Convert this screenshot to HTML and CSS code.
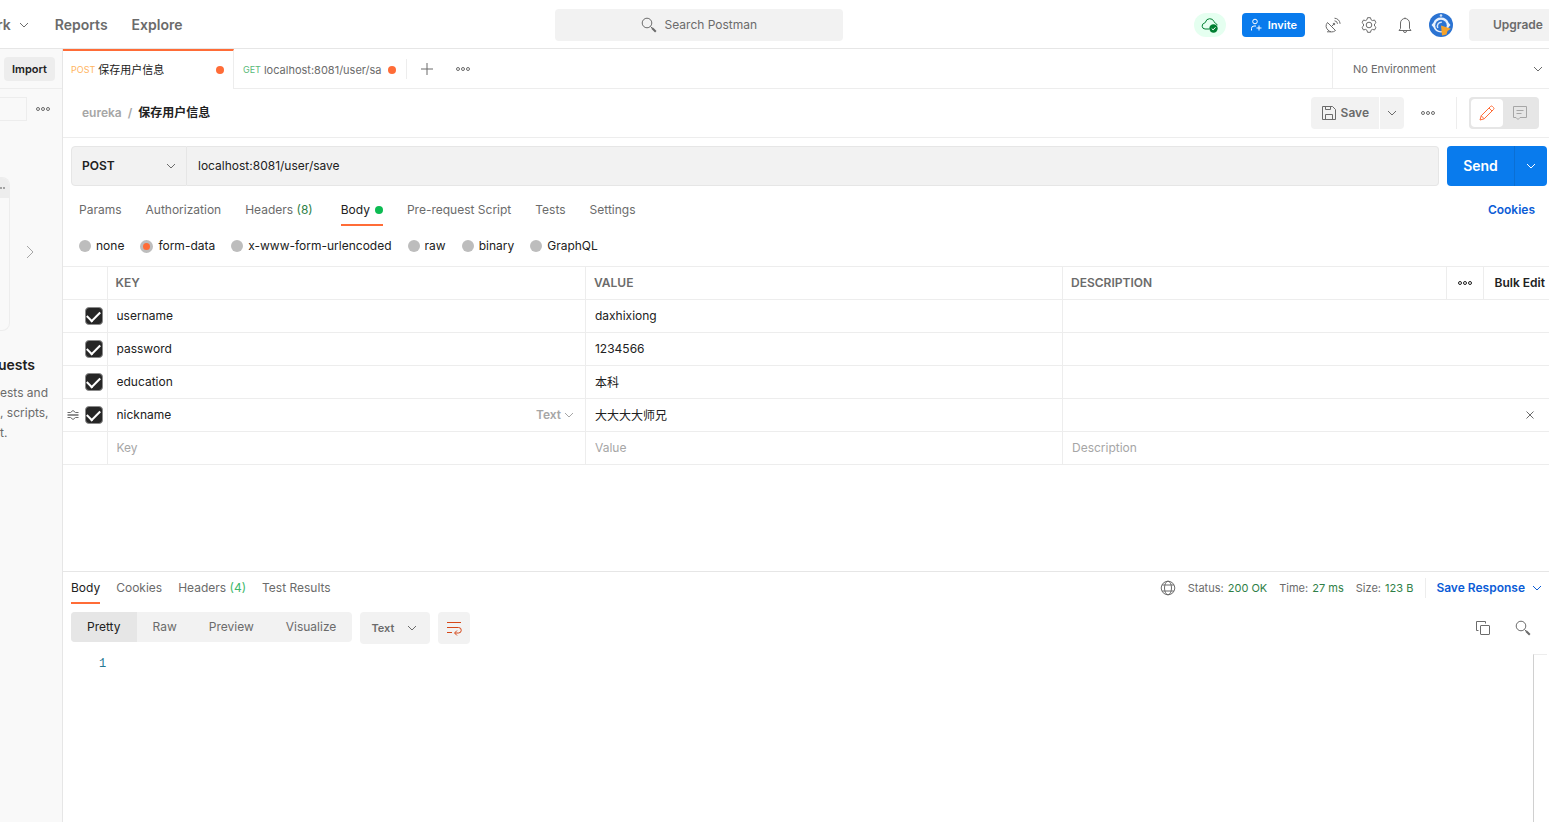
FILE: index.html
```html
<!DOCTYPE html>
<html lang="en">
<head>
    <meta charset="UTF-8">
    <meta name="viewport" content="width=device-width, initial-scale=1.0">
    <title>Postman</title>
    <link rel="stylesheet" href="styles.css">
</head>
<body>
    <!-- shared icons -->
    <svg class="sprite" width="0" height="0" aria-hidden="true">
        <symbol id="chevron" viewBox="0 0 10 6"><path d="M1 1l4 4 4-4"/></symbol>
        <symbol id="dots" viewBox="0 0 14 6"><circle cx="2" cy="3" r="1.5"/><circle cx="7" cy="3" r="1.5"/><circle cx="12" cy="3" r="1.5"/></symbol>
        <symbol id="search" viewBox="0 0 16 16"><circle cx="6" cy="6" r="4.8"/><path d="M9.5 9.5l1.5 1.5"/><path d="M11 11l3.8 3.8" stroke-width="2"/></symbol>
    </svg>

    <header class="topbar">
        <nav class="topnav">
            <a href="#" class="workspace">rk <svg class="icon chevron"><use href="#chevron"/></svg></a>
            <a href="#">Reports</a>
            <a href="#">Explore</a>
        </nav>
        <button type="button" class="search">
            <svg class="icon i16"><use href="#search"/></svg>
            Search Postman
        </button>
        <div class="top-actions">
            <button type="button" class="sync" aria-label="Sync status">
                <svg class="icon" width="18" height="16" viewBox="0 0 18 16">
                    <path d="M8 12H4a3 3 0 0 1-.6-5.9C4 6 4.300 5.700 4.500 5A4.500 4.500 0 0 1 13 4.500c.2.900.5 1.200 1.200 1.500 1.100.5 1.800 1.200 2 2.300"/>
                    <circle cx="12.500" cy="11.500" r="4.200" fill="#007f31" stroke="none"/>
                    <path d="M10.700 11.500l1.400 1.400 2.400-2.600" stroke="#fff"/>
                </svg>
            </button>
            <button type="button" class="invite">
                <svg class="icon" width="12" height="14" viewBox="0 0 12 14"><circle cx="5" cy="3.500" r="2.300"/><path d="M1.500 12.500V10.500a2.500 2.500 0 0 1 2.500-2.500h2M9 7.500v5M6.500 10h5"/></svg>
                Invite
            </button>
            <button type="button" class="plain" aria-label="Capture requests">
                <svg class="icon i16" viewBox="0 0 16 16"><path d="M2.500 5.500l8 8A5.700 5.700 0 0 1 2.500 5.500zM6.500 9.500l2.300-2.300M2 14.800h4M9.500 3.800a3.200 3.200 0 0 1 3 3M9.500 1.200a5.800 5.800 0 0 1 5.600 5.600"/><circle cx="9" cy="7" r=".8" fill="currentColor"/></svg>
            </button>
            <button type="button" class="plain" aria-label="Settings">
                <svg class="icon i16" viewBox="0 0 16 16"><path d="M6.500.7h3l.5 2 1.500.9 2-.6 1.500 2.600L13.500 7v2l1.500 1.400-1.500 2.600-2-.6-1.500.9-.5 2h-3l-.5-2-1.500-.9-2 .6L1 10.400 2.500 9V7L1 5.600 2.500 3l2 .6L6 2.700z"/><circle cx="8" cy="8" r="2.800"/></svg>
            </button>
            <button type="button" class="plain" aria-label="Notifications">
                <svg class="icon i16" viewBox="0 0 16 16"><path d="M8 .5v1M3.500 11.500V6a4.500 4.500 0 0 1 9 0v5.500l1.500 2H2zM6.500 14a1.500 1.500 0 0 0 3 0"/></svg>
            </button>
            <button type="button" class="avatar" aria-label="Account">
                <svg width="24" height="24" viewBox="0 0 24 24">
                    <circle cx="12" cy="12" r="12" fill="#2b73d2"/>
                    <circle cx="12" cy="2.500" r="1.300" fill="#cfe0f7"/>
                    <path d="M12 4.500c4 0 6.500 2 7.600 5.200l1.900 2.300-1.900 2.300c-1.100 3-3.600 5.200-7.600 5.200s-6.500-2.200-7.600-5.200L2.500 12l1.900-2.300C5.500 6.500 8 4.500 12 4.500z" fill="#e9f1fc"/>
                    <circle cx="12" cy="12.500" r="5.800" fill="#2b73d2"/>
                    <path d="M8.800 15a4 4 0 0 1 4-5.800" fill="none" stroke="#d8e7fb" stroke-width="1.500"/>
                    <path d="M12 12.500l10 3.200-3.500 2.300-1 3.500-4.500 1z" fill="#f5a32c"/>
                </svg>
            </button>
            <button type="button" class="upgrade">Upgrade</button>
        </div>
    </header>

    <div class="layout">
        <aside class="sidebar">
            <div class="side-head"><button type="button" class="import">Import</button></div>
            <div class="side-filter">
                <input type="text" class="filter" aria-label="Filter">
                <button type="button" class="plain" aria-label="More"><svg class="icon dots"><use href="#dots"/></svg></button>
            </div>
            <div class="side-card">
                <div class="card"><div class="card-head"><i></i><i></i></div></div>
                <svg class="icon next" width="8" height="14" viewBox="0 0 8 14"><path d="M1 1l6 6-6 6"/></svg>
            </div>
            <div class="side-text">
                <h2>uests</h2>
                <p>ests and<br>, scripts,<br>t.</p>
            </div>
        </aside>

        <main class="main">
            <div class="tabbar">
                <a href="#" class="tab active"><span class="method post">POST</span><span class="tab-name">保存用户信息</span><i class="unsaved"></i></a>
                <a href="#" class="tab"><span class="method get">GET</span><span class="tab-name">localhost:8081/user/sa</span><i class="unsaved"></i></a>
                <div class="tab-tools">
                    <button type="button" class="plain" aria-label="New tab"><svg class="icon" width="12" height="12" viewBox="0 0 12 12"><path d="M6 0v12M0 6h12"/></svg></button>
                    <button type="button" class="plain" aria-label="Tab options"><svg class="icon dots"><use href="#dots"/></svg></button>
                </div>
                <div class="picker environment">
                    <select aria-label="Environment"><option>No Environment</option></select>
                    <svg class="icon chevron"><use href="#chevron"/></svg>
                </div>
            </div>

            <div class="titlebar">
                <a href="#" class="crumb">eureka</a><span class="crumb">/</span><h1>保存用户信息</h1>
                <div class="save-group">
                    <button type="button" class="save">
                        <svg class="icon" width="14" height="14" viewBox="0 0 14 14"><path d="M.5.500h10l3 3v10H.500zM3.500.500v3h5v-3M3.500 13.500v-5h7v5"/></svg>
                        Save
                    </button>
                    <button type="button" class="save-more" aria-label="Save options"><svg class="icon chevron"><use href="#chevron"/></svg></button>
                </div>
                <button type="button" class="plain more" aria-label="More"><svg class="icon dots"><use href="#dots"/></svg></button>
                <div class="modes">
                    <button type="button" class="mode on" aria-label="Edit"><svg class="icon i16" viewBox="0 0 16 16"><path d="M1 15l1.200-4.200L11.500 1.500a1.400 1.400 0 0 1 2 0l1 1a1.400 1.400 0 0 1 0 2L5.200 13.800zM2.200 10.800l3 3M10 3l3 3"/></svg></button>
                    <button type="button" class="mode" aria-label="Comments"><svg class="icon i16" viewBox="0 0 16 16"><path d="M1.500 1.500h13v11H8l-2 2-2-2H1.500zM4.500 5.500h7M4.500 8.500h5"/></svg></button>
                </div>
            </div>

            <form class="request">
                <div class="picker verb">
                    <select aria-label="Method"><option>POST</option><option>GET</option></select>
                    <svg class="icon chevron"><use href="#chevron"/></svg>
                </div>
                <input type="text" class="url" value="localhost:8081/user/save" aria-label="Request URL">
                <div class="send-group">
                    <button type="button" class="send">Send</button>
                    <button type="button" class="send-more" aria-label="Send options"><svg class="icon chevron"><use href="#chevron"/></svg></button>
                </div>
            </form>

            <nav class="subtabs">
                <a href="#">Params</a>
                <a href="#">Authorization</a>
                <a href="#">Headers <span class="count">(8)</span></a>
                <a href="#" class="active">Body<i></i></a>
                <a href="#">Pre-request Script</a>
                <a href="#">Tests</a>
                <a href="#">Settings</a>
                <a href="#" class="cookies">Cookies</a>
            </nav>

            <div class="body-types">
                <label><input type="radio" name="type">none</label>
                <label><input type="radio" name="type" checked>form-data</label>
                <label><input type="radio" name="type">x-www-form-urlencoded</label>
                <label><input type="radio" name="type">raw</label>
                <label><input type="radio" name="type">binary</label>
                <label><input type="radio" name="type">GraphQL</label>
            </div>

            <table class="params">
                <colgroup><col class="c-check"><col class="c-key"><col class="c-value"><col><col class="c-more"><col class="c-bulk"></colgroup>
                <thead>
                    <tr>
                        <th></th><th>KEY</th><th>VALUE</th><th>DESCRIPTION</th>
                        <th class="center"><button type="button" class="plain dark" aria-label="Columns"><svg class="icon dots"><use href="#dots"/></svg></button></th>
                        <th class="bulk"><button type="button" class="plain dark">Bulk Edit</button></th>
                    </tr>
                </thead>
                <tbody>
                    <tr>
                        <td><div class="check"><input type="checkbox" checked aria-label="Use username"></div></td>
                        <td><input type="text" value="username" aria-label="Key"></td>
                        <td><input type="text" value="daxhixiong" aria-label="Value"></td>
                        <td colspan="3"></td>
                    </tr>
                    <tr>
                        <td><div class="check"><input type="checkbox" checked aria-label="Use password"></div></td>
                        <td><input type="text" value="password" aria-label="Key"></td>
                        <td><input type="text" value="1234566" aria-label="Value"></td>
                        <td colspan="3"></td>
                    </tr>
                    <tr>
                        <td><div class="check"><input type="checkbox" checked aria-label="Use education"></div></td>
                        <td><input type="text" value="education" aria-label="Key"></td>
                        <td><input type="text" value="本科" aria-label="Value"></td>
                        <td colspan="3"></td>
                    </tr>
                    <tr>
                        <td>
                            <div class="check">
                                <svg class="icon drag" width="12" height="12" viewBox="0 0 12 12"><path d="M.5 3.500h3L6 1.500l2.500 2h3M.5 8.500h3L6 10.500l2.500-2h3"/><path d="M.5 6h11" stroke-width="1.500"/></svg>
                                <input type="checkbox" checked aria-label="Use nickname">
                            </div>
                        </td>
                        <td>
                            <div class="cell">
                                <input type="text" value="nickname" aria-label="Key">
                                <div class="picker kind">
                                    <select aria-label="Type"><option>Text</option><option>File</option></select>
                                    <svg class="icon chevron"><use href="#chevron"/></svg>
                                </div>
                            </div>
                        </td>
                        <td><input type="text" value="大大大大师兄" aria-label="Value"></td>
                        <td colspan="3" class="remove"><button type="button" class="plain" aria-label="Remove"><svg class="icon" width="8" height="8" viewBox="0 0 8 8"><path d="M.5.500l7 7M7.500.500l-7 7"/></svg></button></td>
                    </tr>
                    <tr class="blank">
                        <td></td>
                        <td><input type="text" placeholder="Key" aria-label="New key"></td>
                        <td><input type="text" placeholder="Value" aria-label="New value"></td>
                        <td colspan="3"><input type="text" placeholder="Description" aria-label="New description"></td>
                    </tr>
                </tbody>
            </table>

            <section class="response">
                <div class="response-head">
                    <nav class="response-tabs">
                        <a href="#" class="active">Body</a>
                        <a href="#">Cookies</a>
                        <a href="#">Headers <span class="ok">(4)</span></a>
                        <a href="#">Test Results</a>
                    </nav>
                    <div class="stats">
                        <svg class="icon" width="16" height="16" viewBox="0 0 16 16"><circle cx="8" cy="8" r="6.800"/><ellipse cx="8" cy="8" rx="3.500" ry="6.800"/><path d="M2 5h12M2 11h12"/></svg>
                        <span>Status: <b>200 OK</b></span>
                        <span>Time: <b>27 ms</b></span>
                        <span>Size: <b>123 B</b></span>
                    </div>
                    <button type="button" class="save-response">Save Response <svg class="icon chevron"><use href="#chevron"/></svg></button>
                </div>
                <div class="viewer-bar">
                    <div class="views">
                        <button type="button" class="on">Pretty</button>
                        <button type="button">Raw</button>
                        <button type="button">Preview</button>
                        <button type="button">Visualize</button>
                    </div>
                    <div class="picker format">
                        <select aria-label="Format"><option>Text</option><option>JSON</option></select>
                        <svg class="icon chevron"><use href="#chevron"/></svg>
                    </div>
                    <button type="button" class="wrap" aria-label="Wrap lines">
                        <svg class="icon i16" viewBox="0 0 16 16"><path d="M1 2.500h14M1 7.500h11.500a2.500 2.500 0 0 1 0 5.500H9M1 12.500h5M11 10.500L8.500 13l2.500 2.500"/></svg>
                    </button>
                    <div class="viewer-tools">
                        <button type="button" class="plain" aria-label="Copy"><svg class="icon i16" viewBox="0 0 16 16"><path d="M3.500 10.500h-2v-9h9v2"/><rect x="5.500" y="5.500" width="9" height="9" rx=".5"/></svg></button>
                        <button type="button" class="plain" aria-label="Search"><svg class="icon i16"><use href="#search"/></svg></button>
                    </div>
                </div>
                <div class="code">
                    <pre>1</pre>
                    <div class="minimap"></div>
                </div>
            </section>
        </main>
    </div>
</body>
</html>
```

FILE: styles.css
```css
*{
    box-sizing: border-box;
}
body{
    margin: 0;
    height: 100vh;
    display: flex;
    flex-direction: column;
    overflow: hidden;
    background: #fff;
    color: #212121;
    font-family: Inter, "Noto Sans CJK SC", sans-serif;
    font-size: 12px;
    line-height: 16px;
}
a{
    color: inherit;
    text-decoration: none;
}
button, input, select{
    font: inherit;
    color: inherit;
    margin: 0;
    padding: 0;
    border: 0;
    outline: 0;
    background: none;
    border-radius: 0;
}
select{
    appearance: none;
}
h1, h2, p, pre{
    margin: 0;
}
.sprite{
    position: absolute;
}
.icon{
    fill: none;
    stroke: currentColor;
    stroke-width: 1;
    flex: none;
    display: block;
}
.i16{
    width: 16px;
    height: 16px;
}
.chevron{
    width: 10px;
    height: 6px;
}
.dots{
    width: 14px;
    height: 6px;
}
.plain{
    color: #6b6b6b;
}
.dark{
    color: #212121;
}

/* select with its own arrow */
.picker{
    display: grid;
    align-items: center;
}
.picker select, .picker svg{
    grid-area: 1 / 1;
}
.picker select{
    width: 100%;
    height: 100%;
}
.picker svg{
    justify-self: end;
    pointer-events: none;
    color: #6b6b6b;
}

/* top bar */
.topbar{
    display: flex;
    align-items: center;
    justify-content: space-between;
    height: 49px;
    flex: none;
    padding-top: 2px;
    border-bottom: 1px solid #e6e6e6;
    color: #6b6b6b;
}
.topnav{
    display: flex;
    flex: 11 1 0;
    gap: 24px;
    font-size: 14px;
    font-weight: 600;
}
.workspace{
    display: flex;
    align-items: center;
    gap: 8px;
    margin-left: -3px;
    margin-right: 2px;
}
.search{
    display: flex;
    align-items: center;
    justify-content: center;
    gap: 8px;
    width: 288px;
    height: 32px;
    border-radius: 4px;
    background: #f2f2f2;
}
.top-actions{
    display: flex;
    flex: 14 1 0;
    align-items: center;
    justify-content: flex-end;
    gap: 20px;
}
.sync{
    display: grid;
    place-items: center;
    width: 32px;
    height: 24px;
    border-radius: 12px;
    background: #e5fff0;
    color: #007f31;
    margin-right: -4px;
}
.invite{
    display: flex;
    align-items: center;
    gap: 6px;
    height: 24px;
    padding: 0 8px;
    border-radius: 4px;
    background: #097bed;
    color: #fff;
    font-size: 11px;
    font-weight: 600;
}
.avatar{
    display: flex;
    margin: 0 -4px;
}
.upgrade{
    width: 80px;
    height: 32px;
    padding-left: 24px;
    border-radius: 4px 0 0 4px;
    background: #f2f2f2;
    font-weight: 600;
    text-align: left;
}

.layout{
    display: flex;
    flex: 1;
    min-height: 0;
}

/* sidebar */
.sidebar{
    width: 63px;
    flex: none;
    overflow: hidden;
    background: #f9f9f9;
    border-right: 1px solid #e6e6e6;
}
.side-head{
    height: 40px;
    padding: 8px 4px;
    border-bottom: 1px solid #ededed;
}
.import{
    height: 24px;
    padding: 0 8px;
    border-radius: 4px;
    background: #ededed;
    font-size: 11px;
    font-weight: 600;
}
.side-filter{
    display: flex;
    align-items: center;
    gap: 9px;
    padding: 8px 0;
}
.filter{
    width: 27px;
    height: 24px;
    border: 1px solid #ededed;
    border-left: 0;
}
.side-card{
    display: flex;
    align-items: center;
    gap: 16px;
    margin-top: 48px;
    color: #a6a6a6;
}
.next{
    margin-bottom: 4px;
}
.card{
    width: 10px;
    height: 154px;
    border: 1px solid #ededed;
    border-left: 0;
    border-radius: 0 8px 8px 0;
    overflow: hidden;
}
.card-head{
    display: flex;
    align-items: center;
    gap: 1px;
    height: 20px;
    background: #ededed;
}
.card-head i{
    width: 2px;
    height: 2px;
    border-radius: 1px;
    background: #8a8a8a;
}
.side-text{
    padding-top: 24px;
    line-height: 20px;
    color: #6b6b6b;
    white-space: nowrap;
}
.side-text h2{
    margin: 0 0 8px -2px;
    color: #212121;
    font-size: 14px;
    font-weight: 600;
}

.main{
    display: flex;
    flex: 1;
    flex-direction: column;
    min-width: 0;
}

/* open requests */
.tabbar{
    display: flex;
    height: 40px;
    flex: none;
    font-size: 11px;
    color: #6b6b6b;
}
.tab{
    display: flex;
    align-items: center;
    gap: 3px;
    width: 172px;
    padding: 2px 10px 0 9px;
    border-bottom: 1px solid #ededed;
}
.tab.active{
    width: 171px;
    padding: 0 9px 0 8px;
    border-top: 2px solid #ff6c37;
    border-right: 1px solid #ededed;
    border-bottom: 0;
    color: #212121;
}
.method{
    font-size: 9px;
}
.post{
    color: #ffb561;
}
.get{
    color: #59b979;
}
.tab-name{
    flex: 1;
    white-space: nowrap;
    overflow: hidden;
}
.unsaved{
    width: 8px;
    height: 8px;
    border-radius: 50%;
    background: #ff6c37;
}
.tab-tools{
    display: flex;
    flex: 1;
    align-items: center;
    gap: 23px;
    border-bottom: 1px solid #ededed;
}
.tab-tools::before{
    content: "";
    width: 1px;
    height: 20px;
    margin-right: -9px;
    background: #ededed;
}
.environment{
    width: 217px;
    border-left: 1px solid #ededed;
    border-bottom: 1px solid #ededed;
    padding: 0 6px 0 20px;
}

/* request name */
.titlebar{
    display: flex;
    align-items: center;
    gap: 6px;
    height: 49px;
    flex: none;
    padding: 0 10px 0 19px;
    border-bottom: 1px solid #ededed;
    color: #6b6b6b;
    font-weight: 600;
}
.crumb{
    color: #a6a6a6;
}
.titlebar h1{
    flex: 1;
    color: #212121;
    font-size: 12px;
}
.save-group{
    display: flex;
    gap: 1px;
}
.save{
    display: flex;
    align-items: center;
    gap: 5px;
    height: 32px;
    padding: 0 10px 0 11px;
    border-radius: 4px 0 0 4px;
    background: #f2f2f2;
}
.save-more{
    display: grid;
    place-items: center;
    width: 24px;
    background: #f2f2f2;
    border-radius: 0 4px 4px 0;
}
.more{
    margin: 0 22px 0 11px;
}
.modes{
    display: flex;
    padding: 2px;
    border-radius: 4px;
    background: #e6e6e6;
    margin-left: 6px;
    position: relative;
}
.modes::before{
    content: "";
    position: absolute;
    left: -13px;
    top: 0;
    bottom: 0;
    width: 1px;
    background: #ededed;
}
.mode{
    display: grid;
    place-items: center;
    width: 34px;
    height: 28px;
    color: #a6a6a6;
}
.mode.on{
    width: 32px;
    border-radius: 4px;
    background: #fff;
    color: #ff6c37;
}

/* url line */
.request{
    display: flex;
    height: 40px;
    flex: none;
    margin: 8px 2px 0 8px;
}
.verb{
    width: 116px;
    padding: 0 10px;
    border: 1px solid #e6e6e6;
    border-radius: 4px 0 0 4px;
    background: #f2f2f2;
    font-weight: 600;
}
.url{
    flex: 1;
    min-width: 0;
    padding: 0 11px;
    border: 1px solid #e6e6e6;
    border-left: 0;
    border-radius: 0 4px 4px 0;
    background: #f2f2f2;
}
.send-group{
    display: flex;
    margin-left: 8px;
    border-radius: 4px;
    background: #097bed;
    color: #fff;
}
.send{
    width: 68px;
    border-right: 1px solid #0a6fd4;
    font-size: 14px;
    font-weight: 600;
}
.send-more{
    display: grid;
    place-items: center;
    width: 32px;
}

/* request sections */
.subtabs{
    display: flex;
    gap: 24px;
    flex: none;
    padding: 8px 14px 0 16px;
    color: #6b6b6b;
}
.subtabs a, .response-tabs a{
    height: 32px;
    line-height: 32px;
}
.subtabs .active, .response-tabs .active{
    color: #212121;
    border-bottom: 2px solid #ff6c37;
}
.subtabs .active{
    margin-left: 4px;
}
.subtabs i{
    display: inline-block;
    width: 8px;
    height: 8px;
    margin-left: 5px;
    border-radius: 50%;
    background: #0cbb52;
}
.count{
    color: #2f7f47;
}
.ok{
    color: #3db76b;
}
.subtabs .cookies{
    margin-left: auto;
    color: #0b5cd6;
    font-weight: 600;
}
.body-types{
    display: flex;
    align-items: center;
    gap: 16px;
    height: 40px;
    flex: none;
    padding-left: 16px;
}
.body-types label{
    display: flex;
    align-items: center;
    gap: 5px;
}
.body-types input{
    appearance: none;
    width: 12px;
    height: 12px;
    border-radius: 50%;
    background: #bdbdbd;
}
.body-types input:checked{
    width: 13px;
    height: 13px;
    border: 3px solid #bdbdbd;
    background: #ff6c37;
}

/* form data table */
.params{
    width: 100%;
    flex: none;
    table-layout: fixed;
    border-collapse: collapse;
    border-bottom: 1px solid #ededed;
}
.c-check{
    width: 44px;
}
.c-key{
    width: 32.2%;
}
.c-value{
    width: 32.1%;
}
.c-more{
    width: 37px;
}
.c-bulk{
    width: 66px;
}
.params th, .params td{
    height: 33px;
    padding: 0 8px;
    border-top: 1px solid #ededed;
    border-right: 1px solid #ededed;
    text-align: left;
}
.params th:last-child, .params td:last-child{
    border-right: 0;
}
.params th{
    color: #6b6b6b;
    font-weight: 600;
}
.params td:first-child{
    padding: 0 4px;
}
.params .center{
    padding: 0 11px;
}
.center button{
    display: block;
}
.params .bulk{
    padding: 0 3px 0 11px;
    white-space: nowrap;
}
.params td > input, .cell input{
    display: block;
    width: 100%;
    height: 32px;
    padding: 0 0 2px 1px;
}
.params ::placeholder{
    color: #a6a6a6;
}
.check{
    display: flex;
    align-items: center;
    justify-content: flex-end;
    gap: 6px;
}
.check .drag{
    color: #6b6b6b;
}
.check input{
    display: grid;
    place-items: center;
    appearance: none;
    width: 18px;
    height: 18px;
    border: 1px solid #8a8a8a;
    border-radius: 4px;
    background: #262626;
}
.check input:checked::before{
    content: "";
    width: 11px;
    height: 6px;
    margin-bottom: 3px;
    border: solid #fff;
    border-width: 0 0 2px 2px;
    transform: rotate(-45deg);
}
.cell{
    display: flex;
    align-items: center;
}
.kind{
    width: 38px;
    flex: none;
    margin-right: 3px;
    color: #a6a6a6;
    font-weight: 600;
}
.kind svg{
    color: #a6a6a6;
}
.params .remove{
    padding-right: 15px;
    text-align: right;
}
.remove button{
    display: block;
    margin-left: auto;
}

/* response */
.response{
    display: flex;
    flex: none;
    flex-direction: column;
    height: 251px;
    margin-top: auto;
    border-top: 1px solid #e6e6e6;
    color: #6b6b6b;
}
.response-head{
    display: flex;
    align-items: center;
    height: 32px;
    padding: 0 7px 0 8px;
}
.response-tabs{
    display: flex;
    flex: 1;
    gap: 16px;
}
.stats{
    display: flex;
    align-items: center;
    gap: 12px;
    font-size: 11px;
}
.stats b{
    margin-left: 1px;
    color: #2f7f47;
    font-weight: 400;
}
.save-response{
    display: flex;
    align-items: center;
    gap: 7px;
    height: 20px;
    margin-left: 12px;
    padding-left: 10px;
    border-left: 1px solid #ededed;
    color: #0b5cd6;
    font-weight: 600;
}
.viewer-bar{
    display: flex;
    align-items: flex-start;
    gap: 8px;
    padding: 8px 18px 0 8px;
}
.views{
    display: flex;
    border-radius: 4px;
    overflow: hidden;
    background: #f2f2f2;
}
.views button{
    height: 30px;
    padding: 0 16px;
}
.views .on{
    background: #e6e6e6;
    color: #212121;
}
.format{
    width: 70px;
    height: 32px;
    padding: 0 13px 0 11px;
    border-radius: 4px;
    background: #f2f2f2;
    font-size: 11px;
    font-weight: 600;
}
.wrap{
    display: grid;
    place-items: center;
    width: 32px;
    height: 32px;
    border-radius: 4px;
    background: #f2f2f2;
    color: #d6481a;
}
.viewer-tools{
    display: flex;
    gap: 24px;
    height: 32px;
    margin-left: auto;
}
.code{
    display: flex;
    flex: 1;
    justify-content: space-between;
    padding: 10px 2px 0 36px;
}
.code pre{
    color: #237893;
    font-family: "Liberation Mono", monospace;
    font-size: 12px;
    line-height: 20px;
}
.minimap{
    width: 14px;
    border-top: 1px solid #ededed;
    border-left: 1px solid #d0d0d0;
}
```
